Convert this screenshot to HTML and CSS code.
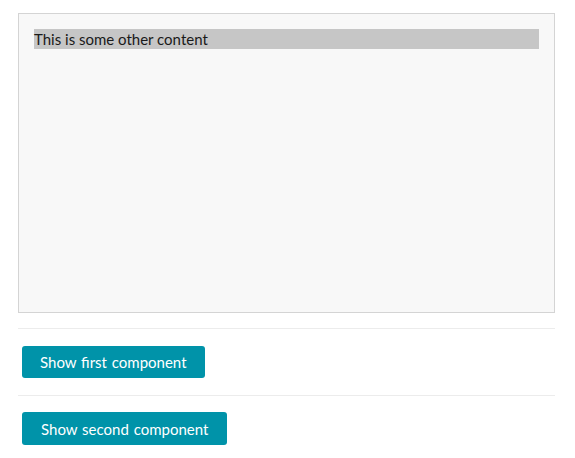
FILE: index.html
```html
<!DOCTYPE html>
<html>
<head>
<meta charset="utf-8">
<link rel="stylesheet" href="styles.css">
</head>
<body>
<div class="page">
  <div class="panel">
    <div class="content">This is some other content</div>
  </div>
  <div class="row"><button class="btn">Show first component</button></div>
  <div class="row"><button class="btn">Show second component</button></div>
</div>
</body>
</html>
```
FILE: styles.css
```css
html, body {
  margin: 0;
  padding: 0;
  background: #fff;
}
body {
  font-family: Lato, "Open Sans", sans-serif;
  color: #1a1a1a;
}
.page {
  padding: 13px 20px 0 18px;
}
.panel {
  box-sizing: border-box;
  height: 300px;
  border: 1px solid #d4d4d4;
  background: #f8f8f8;
  padding: 15px;
}
.content {
  background: #c6c6c6;
  height: 20px;
  font-size: 15px;
  line-height: 20px;
}
.row {
  border-top: 1px solid #ececec;
  margin-top: 15px;
  padding: 17px 4px 0;
}
.row + .row {
  margin-top: 17px;
  padding-top: 16px;
}
.btn {
  font-family: Lato, "Open Sans", sans-serif;
  font-size: 15px;
  word-spacing: 1px;
  color: #fff;
  background: #0093a9;
  border: 0;
  border-radius: 3px;
  height: 32px;
  padding: 0 18px;
  cursor: pointer;
}
.row + .row .btn {
  height: 33px;
  padding: 0 19px;
}
```
